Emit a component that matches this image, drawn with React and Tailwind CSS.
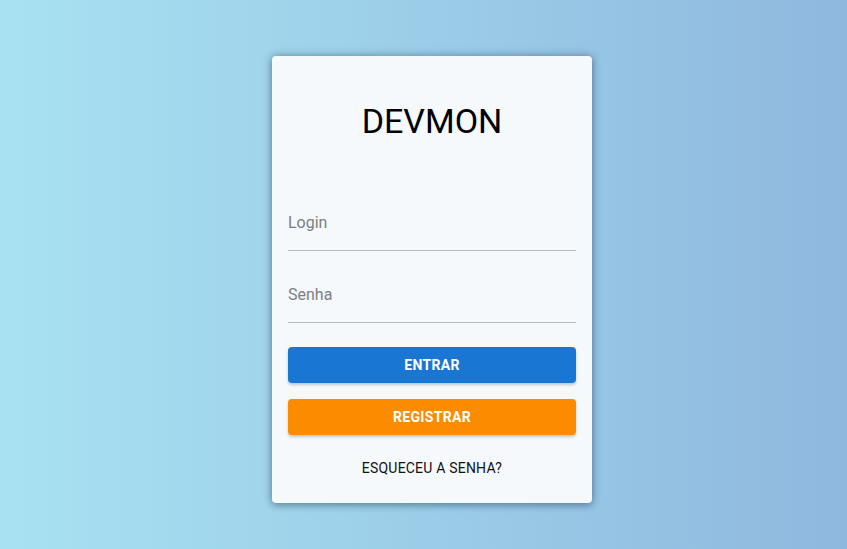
export default function App() {
    return (
        <div
            className="min-h-screen w-full flex justify-center pl-[17px] bg-gradient-to-r from-[#a8e2f2] to-[#8fb8de]"
            style={{ fontFamily: "Roboto, 'Liberation Sans', sans-serif" }}
        >
            <div className="mt-[56px] mb-[46px] w-[320px] h-[447px] bg-[#f5f9fc] rounded-[4px] shadow-[0_0_8px_rgba(30,60,90,0.45),0_3px_6px_rgba(30,60,90,0.25)] px-4 flex flex-col">
                <h1 className="mt-[45px] text-center text-[34px] leading-[40px] font-normal text-black">
                    DEVMON
                </h1>

                <input
                    type="text"
                    placeholder="Login"
                    className="mt-[69px] w-full h-[41px] pb-4 bg-transparent border-b border-[#b5b8bc] text-[16px] leading-6 text-black placeholder:text-[#7b7f84] outline-none"
                />
                <input
                    type="password"
                    placeholder="Senha"
                    className="mt-[31px] w-full h-[41px] pb-4 bg-transparent border-b border-[#b5b8bc] text-[16px] leading-6 text-black placeholder:text-[#7b7f84] outline-none"
                />

                <button className="mt-[24px] h-9 w-full rounded-[4px] bg-[#1976d2] text-white text-[14px] font-bold uppercase tracking-[0.3px] shadow-[0_2px_3px_rgba(0,0,0,0.2)]">
                    Entrar
                </button>
                <button className="mt-4 h-9 w-full rounded-[4px] bg-[#fb8c00] text-white text-[14px] font-bold uppercase tracking-[0.3px] shadow-[0_2px_3px_rgba(0,0,0,0.2)]">
                    Registrar
                </button>

                <div className="mt-[23px] text-center text-[14px] leading-5 font-normal tracking-[0.2px] text-[#111]">
                    ESQUECEU A SENHA?
                </div>
            </div>
        </div>
    );
}
